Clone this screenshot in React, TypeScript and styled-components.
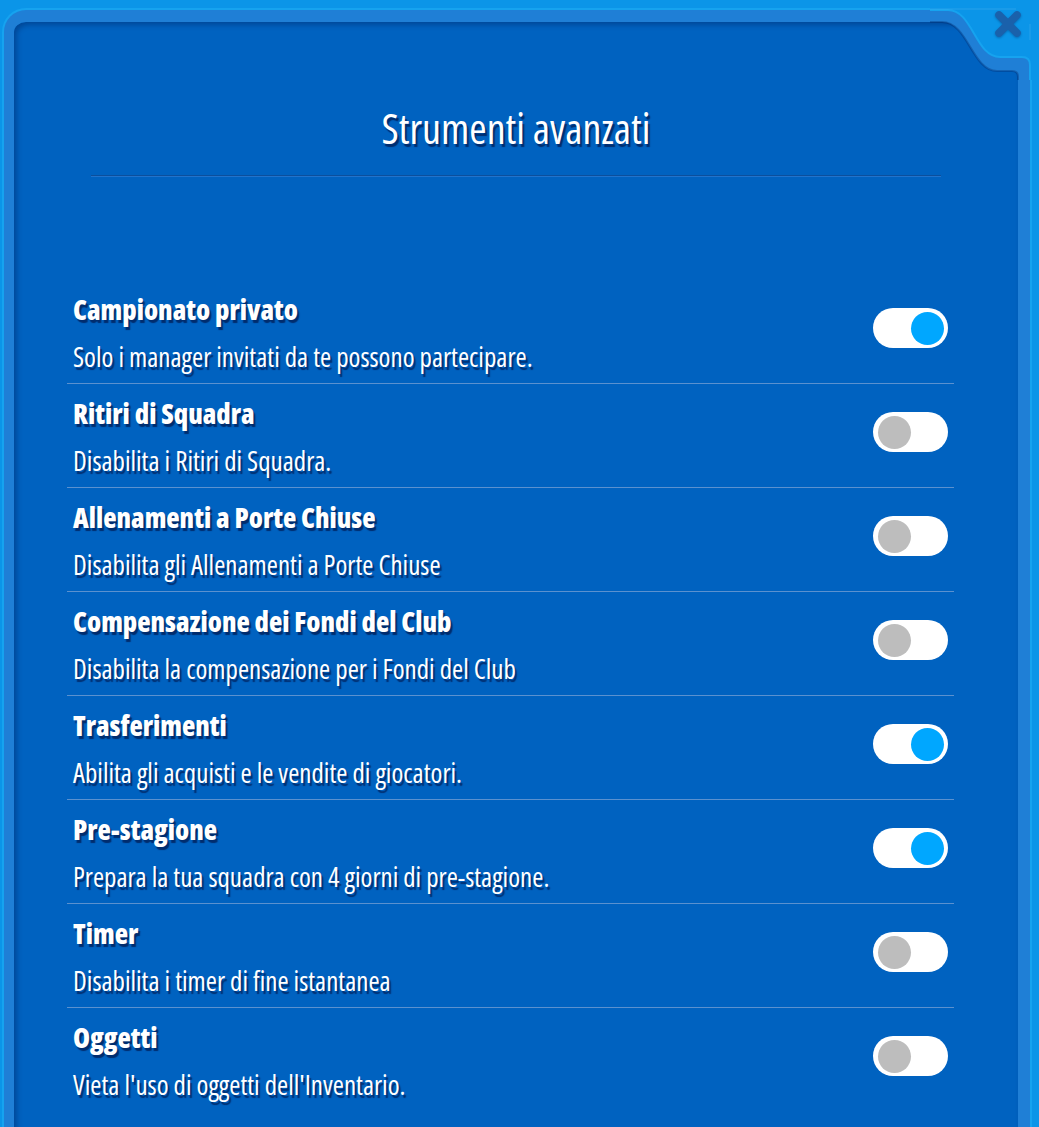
import React from 'react'
import styled, { createGlobalStyle } from 'styled-components'

const FONT = `"Open Sans", "DejaVu Sans Condensed", sans-serif`

const GlobalStyle = createGlobalStyle`
    html, body {
        margin: 0;
        padding: 0;
        height: 1127px;
        overflow: hidden;
        background: #0b95e8;
    }
    body {
        font-family: ${FONT};
        font-stretch: 75%;
        color: #ffffff;
    }
`

const Page = styled.div`
    width: 1039px;
    height: 1127px;
    overflow: hidden;
`

const Frame = styled.div`
    position: relative;
    box-sizing: border-box;
    margin: 10px 9px 0 4px;
    min-height: 1160px;
    background: #0062c0;
    border-style: solid;
    border-color: #1f7fd6;
    border-width: 12px 12px 0 10px;
    border-radius: 22px 22px 0 0;
    box-shadow: 0 0 0 2px #16a3ef, inset 3px 3px 5px rgba(0, 25, 80, 0.35);
`

const Notch = styled.svg`
    position: absolute;
    top: -22px;
    right: -21px;
    width: 109px;
    height: 80px;
`

const CloseButton = styled.button`
    position: absolute;
    top: -12px;
    right: -4px;
    width: 28px;
    height: 28px;
    padding: 0;
    border: none;
    background: transparent;
    cursor: pointer;

    svg {
        display: block;
        filter: drop-shadow(0 1px 1px rgba(0, 40, 100, 0.4));
    }
`

const Header = styled.div`
    padding-top: 86px;
    text-align: center;
`

const Title = styled.h1`
    margin: 0;
    font-family: ${FONT};
    font-stretch: 75%;
    font-weight: 400;
    font-size: 42px;
    line-height: 40px;
    color: #ffffff;
    text-shadow: 2px 3px 1px rgba(0, 35, 95, 0.85);
`

const Divider = styled.div`
    margin: 27px 77px 0;
    height: 0;
    border-top: 1px solid #0c4f9c;
    border-bottom: 1px solid #2173cc;
`

const List = styled.ul`
    list-style-type: none;
    margin: 103px 64px 0 53px;
    padding: 0;
`

const Row = styled.li`
    display: flex;
    flex-direction: row;
    align-items: center;
    justify-content: space-between;
    padding: 12px 6px;
    border-bottom: 1px solid rgba(140, 170, 215, 0.65);

    &:last-child {
        border-bottom-color: transparent;
    }
`

const RowText = styled.div`
    display: flex;
    flex-direction: column;
    gap: 15px;
`

const RowTitle = styled.div`
    font-weight: 800;
    font-size: 27.5px;
    line-height: 36px;
    text-shadow: 2px 3px 1px rgba(0, 35, 95, 0.85);
`

const RowDescription = styled.div`
    font-size: 27px;
    line-height: 28px;
    text-shadow: 2px 3px 1px rgba(0, 35, 95, 0.8);
`

const Switch = styled.button<{ $on: boolean }>`
    position: relative;
    flex: none;
    width: 75px;
    height: 40px;
    margin-bottom: 7px;
    padding: 0;
    border: none;
    border-radius: 20px;
    background: #ffffff;
    cursor: pointer;

    &::after {
        content: '';
        position: absolute;
        top: 3.5px;
        left: ${p => (p.$on ? '38px' : '5px')};
        width: 33px;
        height: 33px;
        border-radius: 50%;
        background: ${p => (p.$on ? '#00a7ff' : '#bdbdbd')};
    }
`

type Option = {
    title: string,
    description: string,
    on: boolean
}

const OPTIONS: Array<Option> = [
    { title: 'Campionato privato', description: 'Solo i manager invitati da te possono partecipare.', on: true },
    { title: 'Ritiri di Squadra', description: 'Disabilita i Ritiri di Squadra.', on: false },
    { title: 'Allenamenti a Porte Chiuse', description: 'Disabilita gli Allenamenti a Porte Chiuse', on: false },
    { title: 'Compensazione dei Fondi del Club', description: 'Disabilita la compensazione per i Fondi del Club', on: false },
    { title: 'Trasferimenti', description: 'Abilita gli acquisti e le vendite di giocatori.', on: true },
    { title: 'Pre-stagione', description: 'Prepara la tua squadra con 4 giorni di pre-stagione.', on: true },
    { title: 'Timer', description: 'Disabilita i timer di fine istantanea', on: false },
    { title: 'Oggetti', description: "Vieta l'uso di oggetti dell'Inventario.", on: false },
]

function App() {
    return (
        <Page>
            <GlobalStyle />
            <Frame>
                {/* cut corner at top right */}
                <Notch viewBox="0 0 109 80">
                    <path
                        d="M0,0 L109,0 L109,80 L100,80 L100,65 Q100,57 92,57 L70,57 C45,57 43,10 18,10 L0,10 Z"
                        fill="#0b95e8"
                    />
                    <path
                        d="M0,10 L18,10 C43,10 45,57 70,57 L92,57 Q100,57 100,65 L100,80 L88,80 L88,77 Q88,71 82,71 L67,71 C42,71 38,22 12,22 L0,22 Z"
                        fill="#1f7fd6"
                    />
                    <path
                        d="M0,10 L18,10 C43,10 45,57 70,57 L92,57 Q100,57 100,65 L100,80"
                        fill="none"
                        stroke="#16a3ef"
                        strokeWidth="2"
                    />
                    <path
                        d="M0,22 L12,22 C38,22 42,71 67,71 L82,71 Q88,71 88,77 L88,80"
                        fill="none"
                        stroke="rgba(0,30,90,0.3)"
                        strokeWidth="2"
                    />
                    <path d="M0,9 L86,9 M100,24 L100,40" stroke="rgba(255,255,255,0.12)" strokeWidth="1" fill="none" />
                </Notch>
                <CloseButton aria-label="Chiudi">
                    <svg width="28" height="28" viewBox="0 0 28 28">
                        <path d="M5,5 L23,23 M23,5 L5,23" stroke="#1a61ab" strokeWidth="7.5" strokeLinecap="round" />
                    </svg>
                </CloseButton>
                <Header>
                    <Title>Strumenti avanzati</Title>
                </Header>
                <Divider />
                <List>
                    {OPTIONS.map(option => (
                        <Row key={option.title}>
                            <RowText>
                                <RowTitle>{option.title}</RowTitle>
                                <RowDescription>{option.description}</RowDescription>
                            </RowText>
                            <Switch $on={option.on} aria-pressed={option.on} />
                        </Row>
                    ))}
                </List>
            </Frame>
        </Page>
    )
}

export default App
